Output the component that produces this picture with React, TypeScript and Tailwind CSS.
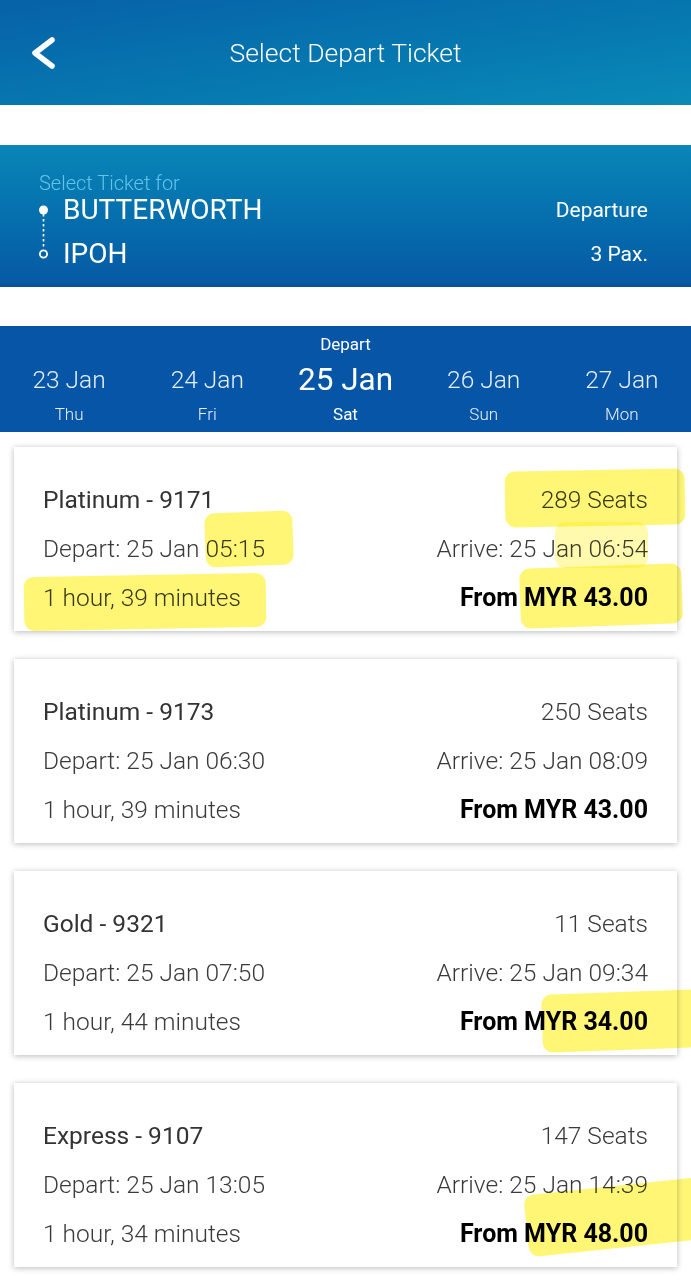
const days = [
  { date: "23 Jan", day: "Thu" },
  { date: "24 Jan", day: "Fri" },
  { date: "25 Jan", day: "Sat", active: true },
  { date: "26 Jan", day: "Sun" },
  { date: "27 Jan", day: "Mon" },
];

const trips = [
  { name: "Platinum - 9171", seats: "289 Seats", depart: "05:15", arrive: "06:54", duration: "1 hour, 39 minutes", price: "43.00" },
  { name: "Platinum - 9173", seats: "250 Seats", depart: "06:30", arrive: "08:09", duration: "1 hour, 39 minutes", price: "43.00" },
  { name: "Gold - 9321", seats: "11 Seats", depart: "07:50", arrive: "09:34", duration: "1 hour, 44 minutes", price: "34.00" },
  { name: "Express - 9107", seats: "147 Seats", depart: "13:05", arrive: "14:39", duration: "1 hour, 34 minutes", price: "48.00" },
];

function Marker({ className }: { className: string }) {
  return (
    <div
      className={`pointer-events-none absolute rounded-[10px] bg-[#fff23a]/70 mix-blend-multiply ${className}`}
    />
  );
}

export default function App() {
  return (
    <div className="relative min-h-[1280px] w-[691px] overflow-hidden bg-white font-['Roboto',sans-serif]">
      <header className="grid h-[105px] grid-cols-[80px_1fr_80px] items-center bg-gradient-to-br from-[#0761a7] to-[#0a8ab7] text-white">
        <svg width="80" height="105" viewBox="0 0 80 105" className="-mt-[1px]">
          <polyline
            points="52,40 35,53 52,66"
            fill="none"
            stroke="white"
            strokeWidth="5.5"
            strokeLinecap="round"
            strokeLinejoin="round"
          />
        </svg>
        <h1 className="text-center text-[26.5px] font-light">Select Depart Ticket</h1>
        <span />
      </header>

      <section className="mt-[40px] flex h-[142px] items-start justify-between border-b-[3px] border-[#0a529d] bg-gradient-to-b from-[#0a86b7] to-[#0759a4] pl-[39px] pr-[43px] pt-[27px] text-white">
        <div>
          <p className="text-[20px] font-light leading-[22px] text-[#62c4e9]">Select Ticket for</p>
          <div className="flex">
            <svg width="12" height="60" viewBox="0 0 12 60" className="mr-[12px] mt-[10px]">
              <circle cx="4.5" cy="6" r="4.5" fill="white" />
              <line x1="4.5" y1="10" x2="4.5" y2="45" stroke="white" strokeWidth="1.6" strokeDasharray="2.5 2.5" />
              <circle cx="4.5" cy="50" r="3.6" fill="none" stroke="white" strokeWidth="1.8" />
            </svg>
            <div className="text-[28px] leading-[32px]">
              <p>BUTTERWORTH</p>
              <p className="mt-[12px]">IPOH</p>
            </div>
          </div>
        </div>
        <div className="mt-[22px] text-right text-[21px] leading-[32px]">
          <p>Departure</p>
          <p className="mt-[12px]">3 Pax.</p>
        </div>
      </section>

      <nav className="mt-[39px] grid h-[106px] grid-cols-5 bg-[#0655a6] text-white">
        {days.map((d) => (
          <div key={d.date} className="flex flex-col items-center">
            <span className={`h-[34px] pt-[8px] text-[17px] leading-[20px] ${d.active ? "" : "invisible"}`}>Depart</span>
            <span className={d.active ? "text-[31.5px] leading-[40px]" : "text-[24.5px] font-light leading-[40px] opacity-90"}>
              {d.date}
            </span>
            <span className={`text-[17px] leading-[28px] ${d.active ? "" : "font-light opacity-90"}`}>{d.day}</span>
          </div>
        ))}
      </nav>

      <main className="flex flex-col gap-[28px] px-[14px] pt-[15px]">
        {trips.map((t) => (
          <div
            key={t.name}
            className="flex h-[184px] flex-col justify-center gap-[24px] bg-white px-[29px] pt-[18px] text-[24.5px] leading-[25px] text-[#3a3a3a] shadow-[0_1px_6px_rgba(0,0,0,0.28)]"
          >
            <div className="flex justify-between">
              <span className="text-[#333]">{t.name}</span>
              <span className="font-light">{t.seats}</span>
            </div>
            <div className="flex justify-between font-light">
              <span>Depart: 25 Jan {t.depart}</span>
              <span>Arrive: 25 Jan {t.arrive}</span>
            </div>
            <div className="flex justify-between">
              <span className="font-light">{t.duration}</span>
              <span className="text-[25px] font-bold text-black">From MYR {t.price}</span>
            </div>
          </div>
        ))}
      </main>

      <Marker className="left-[505px] top-[470px] h-[56px] w-[180px] -rotate-1" />
      <Marker className="left-[205px] top-[512px] h-[54px] w-[88px] -rotate-2" />
      <Marker className="left-[555px] top-[522px] h-[46px] w-[93px] opacity-60" />
      <Marker className="left-[24px] top-[575px] h-[54px] w-[242px] -rotate-1" />
      <Marker className="left-[520px] top-[566px] h-[60px] w-[162px] -rotate-2" />
      <Marker className="left-[542px] top-[992px] h-[58px] w-[160px] -rotate-2" />
      <Marker className="left-[526px] top-[1186px] h-[62px] w-[180px] -rotate-6" />
    </div>
  );
}
